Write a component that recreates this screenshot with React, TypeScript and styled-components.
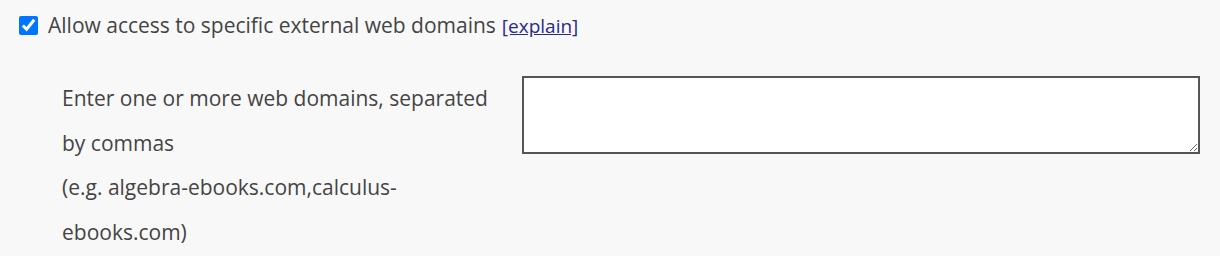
import * as React from 'react'
import styled, { createGlobalStyle } from 'styled-components'

const GlobalStyle = createGlobalStyle`
  body {
    margin: 0;
    background: #f8f8f8;
    font-family: 'Open Sans', 'Noto Sans', sans-serif;
    color: #444;
  }
`

const Panel = styled.div`
  width: 1220px;
  height: 256px;
  overflow: hidden;
  padding: 13px 0 0 19px;
  box-sizing: border-box;
`

const CheckRow = styled.label`
  display: flex;
  align-items: center;
  gap: 10px;
  font-size: 21px;
  line-height: 24px;
`

const Checkbox = styled.input`
  width: 19px;
  height: 19px;
  margin: 0;
  accent-color: #0075ff;
`

const Explain = styled.a`
  font-size: 19px;
  color: #2a2a8a;
  margin-left: 6px;
`

const FieldRow = styled.div`
  display: flex;
  align-items: flex-start;
  gap: 22px;
  margin-top: 39px;
  padding-left: 43px;
`

const Hint = styled.div`
  width: 438px;
  margin-top: -1px;
  font-size: 21px;
  line-height: 44.5px;
`

const DomainBox = styled.textarea`
  width: 678px;
  height: 78px;
  box-sizing: border-box;
  border: 2px solid #555;
  background: #fff;
  resize: both;
  margin: -1px 0 0;
  font-family: inherit;
`

export default function App() {
  return (
    <Panel>
      <GlobalStyle />
      <CheckRow>
        <Checkbox type="checkbox" defaultChecked />
        <span>
          Allow access to specific external web domains
          <Explain href="#">[explain]</Explain>
        </span>
      </CheckRow>
      <FieldRow>
        <Hint>
          Enter one or more web domains, separated by commas
          <br />
          (e.g. algebra-ebooks.com,calculus-ebooks.com)
        </Hint>
        <DomainBox />
      </FieldRow>
    </Panel>
  )
}
